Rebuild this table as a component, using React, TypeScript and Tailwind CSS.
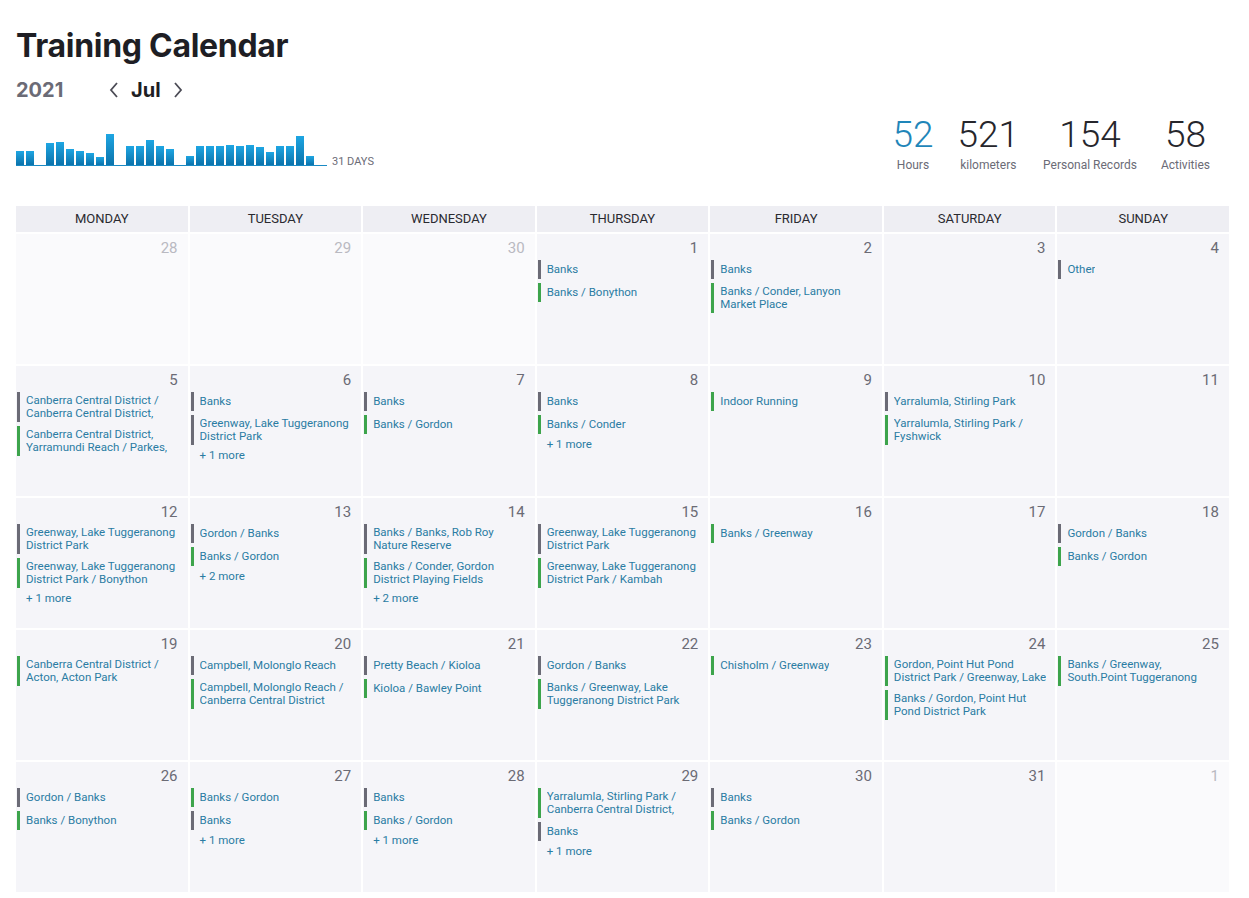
import React from "react";

type Ev = { t: string; c: "g" | "G" };
type Day = { n: number; out?: boolean; ev?: Ev[]; more?: number };

const g = (t: string): Ev => ({ t, c: "g" });
const G = (t: string): Ev => ({ t, c: "G" });

const days: Day[] = [
  { n: 28, out: true },
  { n: 29, out: true },
  { n: 30, out: true },
  { n: 1, ev: [g("Banks"), G("Banks / Bonython")] },
  { n: 2, ev: [g("Banks"), G("Banks / Conder, Lanyon Market Place")] },
  { n: 3 },
  { n: 4, ev: [g("Other")] },
  {
    n: 5,
    ev: [
      g("Canberra Central District / Canberra Central District, Parkes"),
      G("Canberra Central District, Yarramundi Reach / Parkes, Canberra Central District"),
    ],
  },
  { n: 6, ev: [g("Banks"), g("Greenway, Lake Tuggeranong District Park")], more: 1 },
  { n: 7, ev: [g("Banks"), G("Banks / Gordon")] },
  { n: 8, ev: [g("Banks"), G("Banks / Conder")], more: 1 },
  { n: 9, ev: [G("Indoor Running")] },
  { n: 10, ev: [g("Yarralumla, Stirling Park"), G("Yarralumla, Stirling Park / Fyshwick")] },
  { n: 11 },
  {
    n: 12,
    ev: [
      g("Greenway, Lake Tuggeranong District Park"),
      G("Greenway, Lake Tuggeranong District Park / Bonython"),
    ],
    more: 1,
  },
  { n: 13, ev: [g("Gordon / Banks"), G("Banks / Gordon")], more: 2 },
  {
    n: 14,
    ev: [g("Banks / Banks, Rob Roy Nature Reserve"), G("Banks / Conder, Gordon District Playing Fields")],
    more: 2,
  },
  {
    n: 15,
    ev: [
      g("Greenway, Lake Tuggeranong District Park"),
      G("Greenway, Lake Tuggeranong District Park / Kambah"),
    ],
  },
  { n: 16, ev: [G("Banks / Greenway")] },
  { n: 17 },
  { n: 18, ev: [g("Gordon / Banks"), G("Banks / Gordon")] },
  { n: 19, ev: [G("Canberra Central District / Acton, Acton Park")] },
  {
    n: 20,
    ev: [g("Campbell, Molonglo Reach"), G("Campbell, Molonglo Reach / Canberra Central District")],
  },
  { n: 21, ev: [g("Pretty Beach / Kioloa"), G("Kioloa / Bawley Point")] },
  { n: 22, ev: [g("Gordon / Banks"), G("Banks / Greenway, Lake Tuggeranong District Park")] },
  { n: 23, ev: [G("Chisholm / Greenway")] },
  {
    n: 24,
    ev: [
      G("Gordon, Point Hut Pond District Park / Greenway, Lake Tuggeranong District Park"),
      G("Banks / Gordon, Point Hut Pond District Park"),
    ],
  },
  { n: 25, ev: [G("Banks / Greenway, South.Point Tuggeranong")] },
  { n: 26, ev: [g("Gordon / Banks"), G("Banks / Bonython")] },
  { n: 27, ev: [G("Banks / Gordon"), g("Banks")], more: 1 },
  { n: 28, ev: [g("Banks"), G("Banks / Gordon")], more: 1 },
  {
    n: 29,
    ev: [G("Yarralumla, Stirling Park / Canberra Central District, Parkes"), g("Banks")],
    more: 1,
  },
  { n: 30, ev: [g("Banks"), G("Banks / Gordon")] },
  { n: 31 },
  { n: 1, out: true },
];

// bar heights per day of the month, px
const bars = [
  14, 14, 0, 22, 23, 16, 14, 12, 8, 31, 0, 19, 19, 25, 19, 16, 0, 9, 19, 19, 19, 20, 19, 20, 18,
  13, 19, 19, 29, 9, 0,
];

const weekdays = ["MONDAY", "TUESDAY", "WEDNESDAY", "THURSDAY", "FRIDAY", "SATURDAY", "SUNDAY"];

const stats = [
  { v: "52", l: "Hours", blue: true },
  { v: "521", l: "kilometers" },
  { v: "154", l: "Personal Records" },
  { v: "58", l: "Activities" },
];

const Chevron = ({ dir }: { dir: "l" | "r" }) => (
  <svg width="12" height="18" viewBox="0 0 12 18" fill="none" stroke="#4b4b55" strokeWidth="1.8">
    {dir === "l" ? <polyline points="9,2 3,9 9,16" /> : <polyline points="3,2 9,9 3,16" />}
  </svg>
);

const Cell = ({ d }: { d: Day }) => (
  <div className={`h-[130px] pt-[4px] pl-[1px] pr-[9px] ${d.out ? "bg-[#fafafc]" : "bg-[#f5f5f9]"}`}>
    <div
      className={`pr-[1px] text-right text-[15px] leading-[20px] ${d.out ? "text-[#b9b9c1]" : "text-[#6b6b75]"}`}
    >
      {d.n}
    </div>
    <div className="mt-[2px] flex flex-col gap-[4px]">
      {d.ev?.map((e, i) => (
        <div
          key={i}
          className={`border-l-[3px] pl-[6px] py-[2px] min-h-[19px] flex items-center ${
            e.c === "g" ? "border-[#6b6b76]" : "border-[#3da44c]"
          }`}
        >
          <div className="max-h-[26px] overflow-hidden text-[11.5px] leading-[13px] text-[#2a7ca3]">{e.t}</div>
        </div>
      ))}
      {d.more ? (
        <div className="pl-[9px] text-[11.5px] leading-[13px] text-[#2a7ca3]">+ {d.more} more</div>
      ) : null}
    </div>
  </div>
);

export default function App() {
  return (
    <div className="min-h-screen bg-white px-4 pt-[26px] font-['Roboto',sans-serif] text-[#222]">
      <h1 className="font-['Inter',sans-serif] text-[32px] leading-[40px] font-bold tracking-[-0.3px] text-[#1e1e24]">
        Training Calendar
      </h1>
      <div className="mt-[11px] flex items-center font-['Inter',sans-serif]">
        <span className="w-[92px] text-[20px] leading-[26px] font-bold text-[#6b6b76]">2021</span>
        <Chevron dir="l" />
        <span className="mx-[11px] text-[20px] leading-[26px] font-bold text-[#1e1e24]">Jul</span>
        <Chevron dir="r" />
      </div>

      <div className="mt-[12px] flex items-end justify-between w-[1213px]">
        <div className="flex items-end">
          <div className="w-[311px] border-b border-[#1a8ac4] flex items-end h-[33px]">
            {bars.map((h, i) => (
              <div key={i} className="w-[10px] flex items-end">
                <div
                  className="w-[8px] bg-linear-to-b from-[#1ea6e3] to-[#0b73ab]"
                  style={{ height: h }}
                />
              </div>
            ))}
          </div>
          <span className="ml-[5px] text-[11px] leading-[12px] text-[#6b6b76] mb-[-2px]">31 DAYS</span>
        </div>
        <div className="flex pr-[7px] mb-[-6px]">
          {stats.map((s) => (
            <div key={s.l} className="flex flex-col items-center px-[12px]">
              <span
                className={`text-[37px] leading-[40px] font-light ${s.blue ? "text-[#1f86b9]" : "text-[#26262c]"}`}
              >
                {s.v}
              </span>
              <span className="mt-[3px] text-[12px] leading-[14px] text-[#6b6b76]">{s.l}</span>
            </div>
          ))}
        </div>
      </div>

      <div className="mt-[40px] w-[1213px] grid grid-cols-7 gap-[2px]">
        {weekdays.map((w) => (
          <div
            key={w}
            className="h-[26px] bg-[#eeeef3] flex items-center justify-center text-[13px] text-[#2a2a30]"
          >
            {w}
          </div>
        ))}
        {days.map((d, i) => (
          <Cell key={i} d={d} />
        ))}
      </div>
    </div>
  );
}
